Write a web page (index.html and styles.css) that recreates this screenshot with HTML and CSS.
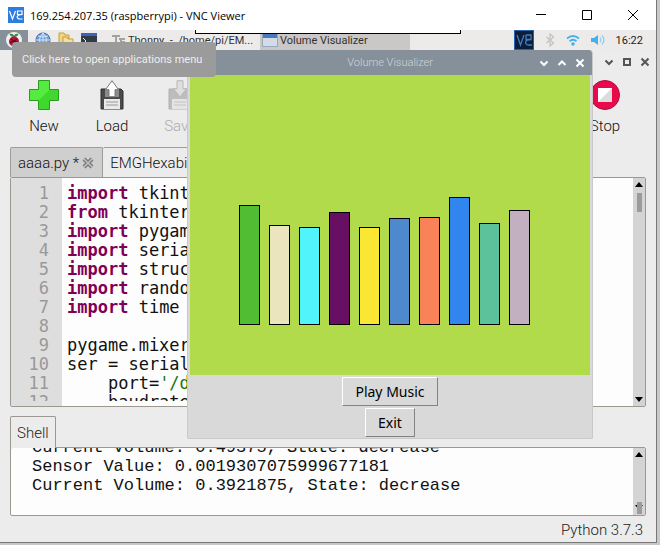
FILE: index.html
```
<!DOCTYPE html>
<html lang="en">
<head>
    <meta charset="UTF-8">
    <meta name="viewport" content="width=device-width, initial-scale=1.0">
    <title>169.254.207.35 (raspberrypi) - VNC Viewer</title>
    <link rel="stylesheet" href="styles.css">
</head>
<body>
    <div class="viewer">
        <header class="titlebar">
            <svg class="vnc-logo" width="16" height="16" viewBox="0 0 16 16">
                <rect width="16" height="16" fill="#2b7de0"/>
                <path d="M1.500 4l3 8 3-8M9 4h5v3.500H9.500V4M14 7.500c-6 0-6 4.500-2 4.500h2.500" fill="none" stroke="#fff" stroke-width="1.200"/>
            </svg>
            <span class="titlebar-text">169.254.207.35 (raspberrypi) - VNC Viewer</span>
            <div class="titlebar-controls">
                <button aria-label="Minimize"><svg width="12" height="12" viewBox="0 0 12 12"><path d="M1 5.500h10"/></svg></button>
                <button aria-label="Maximize"><svg width="12" height="12" viewBox="0 0 12 12"><path d="M1.500 1.500h9v9h-9z"/></svg></button>
                <button aria-label="Close"><svg width="12" height="12" viewBox="0 0 12 12"><path d="M1 1l10 10M11 1L1 11"/></svg></button>
            </div>
        </header>

        <main class="desktop">
            <div class="toolbar-handle"></div>

            <nav class="taskbar">
                <button class="menu-button" aria-label="Applications menu">
                    <svg width="16" height="18" viewBox="0 0 16 18">
                        <circle cx="8" cy="9" r="8" fill="#eef0ee"/>
                        <path d="M8 6C6 6 4 5 3.500 3 6 2.500 7.500 3.500 8 5c.5-1.500 2-2.500 4.500-2C12 5 10 6 8 6z" fill="#3c8a35"/>
                        <circle cx="8" cy="10.500" r="5" fill="#b5123c"/>
                        <path d="M5 8l3 2 3-2M8 10v5M4 11.500l4-1.500 4 1.500" stroke="#4e0c1c" fill="none"/>
                    </svg>
                </button>
                <div class="launchers">
                    <button aria-label="Web browser">
                        <svg width="16" height="16" viewBox="0 0 16 16">
                            <circle cx="8" cy="8" r="7" fill="#6c9cd8" stroke="#3c6cab"/>
                            <path d="M1 8h14M8 1v14M3 4q5 2 10 0M8 1q-7 7 0 14M8 1q7 7 0 14" fill="none" stroke="#d4e6fa"/>
                        </svg>
                    </button>
                    <button aria-label="File manager">
                        <svg width="16" height="16" viewBox="0 0 16 16">
                            <path d="M1 1h5l1 2h4v9H1z" fill="#f1d480" stroke="#c49e46"/>
                            <path d="M5 5h4l1 2h5v8H5z" fill="#f7df96" stroke="#c49e46"/>
                        </svg>
                    </button>
                    <button aria-label="Terminal">
                        <svg width="16" height="16" viewBox="0 0 16 16">
                            <path d="M0 1h16v14H0z" fill="#303b43"/>
                            <path d="M0 1h16v3H0z" fill="#3d62c4"/>
                            <path d="M2 6l3 3-3 3M7 12h4" fill="none" stroke="#e8e8e8"/>
                        </svg>
                    </button>
                </div>
                <button class="task">
                    <svg width="14" height="14" viewBox="0 0 14 14"><path d="M0 2h8v2H5v9H3V4H0zM7 5h6v2h-3v1h3v2h-3v3H8V7H7z" fill="#a2a2a2"/></svg>
                    <span>Thonny&nbsp; -&nbsp; /home/pi/EM...</span>
                </button>
                <button class="task task-active">
                    <svg width="16" height="14" viewBox="0 0 16 14">
                        <rect x=".5" y=".5" width="15" height="13" fill="#d2dce8" stroke="#9aa8ba"/>
                        <path d="M1 1h14v4H1z" fill="#4a79b8"/>
                    </svg>
                    <span>Volume Visualizer</span>
                </button>
                <div class="tray">
                    <svg width="20" height="20" viewBox="0 0 20 20">
                        <rect x=".5" y=".5" width="19" height="19" fill="#0d1f38" stroke="#2763a8"/>
                        <path d="M3 5l3.500 10L10 5M12 5h5v4.500h-5V5M17 9.500c-7 0-6.500 5.500-2.500 5.500H18" fill="none" stroke="#3f7dc4" stroke-width="1.300"/>
                    </svg>
                    <svg width="10" height="14" viewBox="0 0 10 14"><path d="M1.500 4l7 6L5 13V1l3.500 3-7 6" fill="none" stroke="#c3c3c3" stroke-width="1.300"/></svg>
                    <svg width="14" height="12" viewBox="0 0 14 12">
                        <path d="M1 4.500q6-5 12 0M3.500 7.200q3.500-3 7 0" fill="none" stroke="#43b1ec" stroke-width="1.800"/>
                        <circle cx="7" cy="10" r="1.800" fill="#43b1ec"/>
                    </svg>
                    <svg width="14" height="12" viewBox="0 0 14 12">
                        <path d="M0 4h3l4-3v10L3 8H0z" fill="#43b1ec"/>
                        <path d="M9 3.500q2 2.500 0 5M11 1.500q4 4.500 0 9" fill="none" stroke="#8bcdf2" stroke-width="1.200"/>
                    </svg>
                    <time>16:22</time>
                </div>
            </nav>

            <section class="thonny">
                <div class="window-controls thonny-controls">
                    <button aria-label="Minimize"><svg width="10" height="10" viewBox="0 0 10 10"><path d="M1.500 3.500L5 7l3.500-3.500"/></svg></button>
                    <button aria-label="Maximize"><svg width="10" height="10" viewBox="0 0 10 10"><path d="M2 2h6v6H2z"/></svg></button>
                    <button aria-label="Close"><svg width="10" height="10" viewBox="0 0 10 10"><path d="M1.500 1.500l7 7M8.500 1.500l-7 7"/></svg></button>
                </div>

                <div class="tools">
                    <button class="tool">
                        <svg width="30" height="30" viewBox="0 0 30 30">
                            <path d="M9.500 .5h11v9h9v11h-9v9h-11v-9h-9v-11h9z" fill="#3fd82c"/>
                            <path d="M9.500 .5h11v9L9.500 20.500h-9v-11h9z" fill="#56ec3f"/>
                            <path d="M9.500 .5h11v9h9v11h-9v9h-11v-9h-9v-11h9z" fill="none" stroke="#2c9a20"/>
                        </svg>
                        <span>New</span>
                    </button>
                    <button class="tool">
                        <svg width="24" height="30" viewBox="0 0 24 30">
                            <path d="M1 9h20l2 2v18H1z" fill="#4a4a4a" stroke="#2e2e2e"/>
                            <path d="M5 9h14v8H5z" fill="#8b8b8b"/>
                            <path d="M4 19h16v10H4z" fill="#e9e9e9"/>
                            <path d="M6 22h12M6 25h12" stroke="#999"/>
                            <path d="M12 .7l6.500 9H15v7H9v-7H5.500z" fill="#fff" stroke="#777"/>
                        </svg>
                        <span>Load</span>
                    </button>
                    <button class="tool" disabled>
                        <svg width="24" height="30" viewBox="0 0 24 30">
                            <path d="M1 9h20l2 2v18H1z" fill="#bdbdbd" stroke="#b0b0b0"/>
                            <path d="M4 19h16v10H4z" fill="#e4e4e4"/>
                            <path d="M6 22h12M6 25h12" stroke="#c4c4c4"/>
                            <path d="M9 .7h6v8h3.500L12 17 5.500 8.700H9z" fill="#dedede" stroke="#b8b8b8"/>
                        </svg>
                        <span>Save</span>
                    </button>
                    <button class="tool tool-stop">
                        <svg width="30" height="30" viewBox="0 0 30 30">
                            <circle cx="15" cy="15" r="14.500" fill="#ea0a4c" stroke="#a80d3c"/>
                            <path d="M8 8h14v14H8z" fill="#fff"/>
                            <path d="M22 8v14H8z" fill="#dcdcdc"/>
                        </svg>
                        <span>Stop</span>
                    </button>
                </div>

                <div class="tabs">
                    <div class="tab tab-back">
                        <span>aaaa.py *</span>
                        <button aria-label="Close tab"><svg width="12" height="12" viewBox="0 0 12 12"><path d="M2 2l8 8M10 2l-8 8" stroke="#777" stroke-width="4"/><path d="M2 2l8 8M10 2l-8 8" stroke="#c4c4c4" stroke-width="1.500"/></svg></button>
                    </div>
                    <div class="tab tab-front">EMGHexabits.py</div>
                </div>
                <div class="pane editor">
                    <pre class="gutter">1
2
3
4
5
6
7
8
9
10
11
12</pre>
                    <pre class="code"><b>import</b> tkinter
<b>from</b> tkinter
<b>import</b> pygame
<b>import</b> serial
<b>import</b> struct
<b>import</b> random
<b>import</b> time

pygame.mixer
ser = serial
    port=<i>'/d</i>
    baudrate</pre>
                    <div class="scrollbar">
                        <span class="arrow-up"></span>
                        <span class="thumb"></span>
                        <span class="arrow-down"></span>
                    </div>
                </div>

                <div class="shell-tab">Shell</div>
                <div class="pane shell">
                    <pre class="output">Current Volume: 0.49375, State: decrease
Sensor Value: 0.0019307075999677181
Current Volume: 0.3921875, State: decrease</pre>
                    <div class="scrollbar scrollbar-end">
                        <span class="arrow-up"></span>
                        <span class="arrow-down"></span>
                        <span class="thumb"></span>
                    </div>
                </div>
                <footer class="status">Python 3.7.3</footer>
            </section>

            <section class="visualizer">
                <div class="visualizer-title">
                    <span>Volume Visualizer</span>
                    <div class="window-controls">
                        <button aria-label="Minimize"><svg width="10" height="10" viewBox="0 0 10 10"><path d="M1.500 3.500L5 7l3.500-3.500"/></svg></button>
                        <button aria-label="Maximize"><svg width="10" height="10" viewBox="0 0 10 10"><path d="M1.500 7L5 3.500 8.500 7"/></svg></button>
                        <button aria-label="Close"><svg width="10" height="10" viewBox="0 0 10 10"><path d="M1.500 1.500l7 7M8.500 1.500l-7 7"/></svg></button>
                    </div>
                </div>
                <div class="bars">
                    <div class="bar" style="height: 120px; background: #51bd33"></div>
                    <div class="bar" style="height: 100px; background: #ebe5be"></div>
                    <div class="bar" style="height: 98px; background: #50f4fa"></div>
                    <div class="bar" style="height: 113px; background: #660f63"></div>
                    <div class="bar" style="height: 98px; background: #fae733"></div>
                    <div class="bar" style="height: 107px; background: #4e89cd"></div>
                    <div class="bar" style="height: 108px; background: #fa8258"></div>
                    <div class="bar" style="height: 128px; background: #3085ef"></div>
                    <div class="bar" style="height: 102px; background: #5bc29b"></div>
                    <div class="bar" style="height: 115px; background: #c2b0c0"></div>
                </div>
                <div class="actions">
                    <button>Play Music</button>
                    <button>Exit</button>
                </div>
            </section>

            <div class="tooltip" role="tooltip">Click here to open applications menu</div>
        </main>
    </div>
</body>
</html>
```

FILE: styles.css
```
* {
    box-sizing: border-box;
}
body {
    margin: 0;
    padding: 0 3px 2px 0;
    height: 100vh;
    background: #c8c8c8;
    font-family: Roboto, sans-serif;
    color: #222;
}
button {
    margin: 0;
    padding: 0;
    border: 0;
    background: none;
    font: inherit;
    color: inherit;
}
svg {
    display: block;
    flex: none;
}
pre {
    margin: 0;
}

/* VNC viewer window */
.viewer {
    display: flex;
    flex-direction: column;
    height: 100%;
    border-right: 1px solid #777;
    border-bottom: 1px solid #777;
}
.titlebar {
    display: flex;
    align-items: center;
    height: 30px;
    padding-left: 8px;
    gap: 6px;
    background: #fff;
    color: #000;
}
.titlebar-text {
    font-family: "Open Sans", sans-serif;
    font-size: 11px;
}
.titlebar-controls {
    display: flex;
    margin-left: auto;
}
.titlebar-controls button {
    display: flex;
    justify-content: center;
    width: 46px;
}
.titlebar-controls svg {
    fill: none;
    stroke: #000;
}
.desktop {
    position: relative;
    display: flex;
    flex-direction: column;
    flex: 1;
    min-height: 0;
    overflow: hidden;
    background: #ececec;
}
.toolbar-handle {
    position: absolute;
    z-index: 3;
    left: 195px;
    top: 0;
    width: 266px;
    height: 4px;
    background: #fff;
    border: 1px solid #000;
    border-top: 0;
}

/* Raspberry Pi panel */
.taskbar {
    display: flex;
    align-items: center;
    height: 20px;
    background: #ecebea;
    font-size: 11px;
    color: #333;
}
.menu-button {
    display: flex;
    align-items: center;
    justify-content: center;
    width: 28px;
    height: 20px;
    background: #85909b;
}
.launchers {
    display: flex;
    gap: 7px;
    padding: 0 13px 0 7px;
}
.task {
    display: flex;
    align-items: center;
    gap: 2px;
    width: 150px;
    height: 20px;
    padding-left: 2px;
    white-space: nowrap;
}
.task-active {
    background: #cac8c6;
}
.tray {
    display: flex;
    align-items: center;
    gap: 11px;
    margin-left: auto;
    padding-right: 13px;
}
.tray time {
    color: #222;
}

/* Thonny */
.thonny {
    display: flex;
    flex-direction: column;
    flex: 1;
    min-height: 0;
    padding: 0 10px;
    font-size: 15px;
}
.window-controls {
    display: flex;
    gap: 8px;
}
.window-controls svg {
    fill: none;
    stroke: currentColor;
    stroke-width: 2;
}
.thonny-controls {
    height: 24px;
    align-items: center;
    justify-content: flex-end;
    margin-right: -4px;
    color: #555;
}
.tools {
    display: flex;
    margin: 6px 0 11px;
}
.tool {
    display: flex;
    flex-direction: column;
    align-items: center;
    gap: 6px;
    width: 68px;
    line-height: 20px;
    font-weight: 300;
    color: #111;
}
.tool:disabled {
    color: #aaa;
}
.tool-stop {
    margin-left: auto;
    margin-right: 7px;
}
.tabs {
    display: flex;
    height: 30px;
    line-height: 20px;
    font-weight: 300;
    color: #111;
}
.tab {
    display: flex;
    align-items: center;
    gap: 3px;
    padding: 0 8px 0 7px;
    border: 1px solid #a09c96;
    border-bottom: 0;
    border-radius: 2px 2px 0 0;
}
.tab-back {
    background: #cfcfcf;
}
.tab-front {
    border-left: 0;
}
.pane {
    display: flex;
    border: 1px solid #9c9890;
    border-radius: 2px;
    background: #fdfdfd;
    overflow: hidden;
}
.editor {
    flex: 1;
    min-height: 0;
    font-size: 17px;
    line-height: 19px;
    color: #111;
}
.gutter,
.code {
    padding-top: 6px;
    overflow: hidden;
    font-family: "DejaVu Sans Mono", monospace;
}
.gutter {
    width: 51px;
    padding-right: 13px;
    border-bottom: 5px solid #dedede;
    background: #dedede;
    color: #999;
    text-align: right;
}
.code {
    flex: 1;
    padding-left: 5px;
    border-bottom: 5px solid #fdfdfd;
}
.code b {
    color: #7f0055;
}
.code i {
    font-style: normal;
    color: #117711;
}
.scrollbar {
    display: flex;
    flex-direction: column;
    align-items: center;
    gap: 6px;
    width: 12px;
    padding: 4px 1px;
    background: #d4d4d4;
}
.arrow-up,
.arrow-down {
    border: 4px solid transparent;
}
.arrow-up {
    border-top: 0;
    border-bottom: 5px solid #000;
}
.arrow-down {
    margin-top: auto;
    border-bottom: 0;
    border-top: 5px solid #000;
}
.thumb {
    width: 5px;
    height: 19px;
    background: #9b9b9b;
}
.scrollbar-end {
    gap: 0;
    padding-bottom: 1px;
}
.scrollbar-end .thumb {
    height: 12px;
    margin-top: -8px;
}
.shell-tab {
    position: relative;
    align-self: flex-start;
    height: 32px;
    margin: 9px 0 -1px;
    padding: 0 6px;
    border: 1px solid #9c9890;
    border-bottom: 0;
    border-radius: 2px 2px 0 0;
    background: #ececec;
    line-height: 32px;
    font-weight: 300;
}
.shell {
    height: 69px;
}
.output {
    display: flex;
    align-items: flex-end;
    flex: 1;
    padding: 0 0 20px 21px;
    font-family: "Liberation Mono", monospace;
    font-size: 17px;
    line-height: 19px;
    color: #111;
}
.status {
    height: 26px;
    padding-right: 3px;
    line-height: 29px;
    font-weight: 300;
    text-align: right;
}

/* Floating tkinter window */
.visualizer {
    position: absolute;
    z-index: 1;
    left: 187px;
    top: 20px;
    width: 406px;
    border: 1px solid #c9c9c9;
    border-top: 0;
    border-radius: 4px 4px 2px 2px;
    background: #d9d9d9;
    overflow: hidden;
}
.visualizer-title {
    display: flex;
    align-items: center;
    justify-content: flex-end;
    gap: 106px;
    height: 25px;
    padding-right: 7px;
    background: #85909b;
    color: #d0d5da;
    font-size: 11px;
    font-weight: 300;
}
.visualizer-title .window-controls {
    color: #fff;
}
.bars {
    display: flex;
    align-items: flex-end;
    gap: 9px;
    height: 300px;
    margin: 0 2px;
    padding: 0 49px 50px;
    background: #b2db4c;
}
.bar {
    width: 21px;
    border: 1px solid #000;
}
.actions {
    display: flex;
    flex-direction: column;
    align-items: center;
    gap: 2px;
    padding: 2px 0 1px;
}
.actions button {
    padding: 0 12px;
    border: 1px solid;
    border-color: #fff #828282 #828282 #fff;
    font-family: "Noto Sans", sans-serif;
    font-size: 14px;
    line-height: 27px;
    color: #000;
}

.tooltip {
    position: absolute;
    z-index: 2;
    left: 12px;
    top: 12px;
    padding: 8px 14px 8px 10px;
    border-radius: 4px;
    background: #9b9b9b;
    color: #eee;
    font-size: 11px;
    line-height: 19px;
    white-space: nowrap;
}
```
